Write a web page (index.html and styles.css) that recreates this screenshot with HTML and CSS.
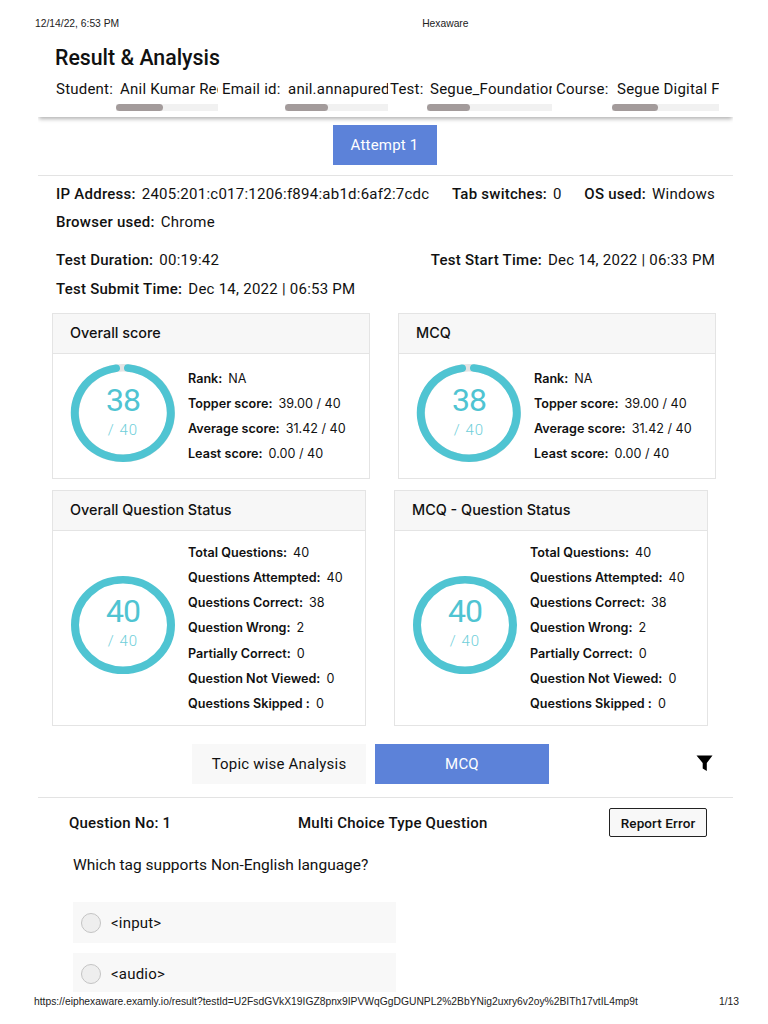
FILE: index.html
```html
<!DOCTYPE html>
<html lang="en">
<head>
<meta charset="utf-8">
<title>Hexaware</title>
<link rel="stylesheet" href="styles.css">
</head>
<body>
<div class="page">
  <header class="print-head">
    <span class="print-date">12/14/22, 6:53 PM</span>
    <span class="print-title">Hexaware</span>
  </header>
  <main class="sheet">
    <section class="top">
      <h1 class="title">Result &amp; Analysis</h1>
      <div class="meta">
        <div class="meta-cell cell-student"><span class="meta-label">Student:</span><div class="meta-scroll"><span class="meta-value">Anil Kumar Reddy Annapureddy</span><div class="track"><div class="thumb"></div></div></div></div>
        <div class="meta-cell cell-email"><span class="meta-label">Email id:</span><div class="meta-scroll"><span class="meta-value">anil.annapureddy@hexaware.com</span><div class="track"><div class="thumb"></div></div></div></div>
        <div class="meta-cell cell-test"><span class="meta-label">Test:</span><div class="meta-scroll"><span class="meta-value">Segue_Foundation_Assessment</span><div class="track"><div class="thumb"></div></div></div></div>
        <div class="meta-cell cell-course"><span class="meta-label">Course:</span><div class="meta-scroll"><span class="meta-value">Segue Digital Foundation</span><div class="track"><div class="thumb"></div></div></div></div>
      </div>
    </section>
    <div class="attempt-bar"><button class="attempt">Attempt 1</button></div>
    <section class="info">
      <div class="info-row">
        <span><b>IP Address:</b>2405:201:c017:1206:f894:ab1d:6af2:7cdc</span>
        <span><b>Tab switches:</b>0</span>
        <span><b>OS used:</b>Windows</span>
      </div>
      <div class="info-row row-browser"><span><b>Browser used:</b>Chrome</span></div>
      <div class="info-row row-duration">
        <span><b>Test Duration:</b>00:19:42</span>
        <span><b>Test Start Time:</b>Dec 14, 2022 | 06:33 PM</span>
      </div>
      <div class="info-row row-submit"><span><b>Test Submit Time:</b>Dec 14, 2022 | 06:53 PM</span></div>
    </section>
    <section class="cards cards-score">
      <article class="card">
        <h2 class="card-head">Overall score</h2>
        <div class="card-body">
          <div class="ring">
            <svg viewBox="0 0 106 106" preserveAspectRatio="none" class="ring-svg"><circle class="ring-bg" cx="53" cy="53" r="48"/><path class="ring-fg" d="M58 5.3A48 48 0 1 1 46 5.500"/></svg>
            <div class="ring-text"><span class="ring-num">38</span><span class="ring-den">/ 40</span></div>
          </div>
          <ul class="stats">
            <li><b>Rank:</b>NA</li>
            <li><b>Topper score:</b>39.00 / 40</li>
            <li><b>Average score:</b>31.42 / 40</li>
            <li><b>Least score:</b>0.00 / 40</li>
          </ul>
        </div>
      </article>
      <article class="card">
        <h2 class="card-head">MCQ</h2>
        <div class="card-body">
          <div class="ring">
            <svg viewBox="0 0 106 106" preserveAspectRatio="none" class="ring-svg"><circle class="ring-bg" cx="53" cy="53" r="48"/><path class="ring-fg" d="M58 5.3A48 48 0 1 1 46 5.500"/></svg>
            <div class="ring-text"><span class="ring-num">38</span><span class="ring-den">/ 40</span></div>
          </div>
          <ul class="stats">
            <li><b>Rank:</b>NA</li>
            <li><b>Topper score:</b>39.00 / 40</li>
            <li><b>Average score:</b>31.42 / 40</li>
            <li><b>Least score:</b>0.00 / 40</li>
          </ul>
        </div>
      </article>
    </section>
    <section class="cards cards-status">
      <article class="card">
        <h2 class="card-head">Overall Question Status</h2>
        <div class="card-body">
          <div class="ring">
            <svg viewBox="0 0 106 106" preserveAspectRatio="none" class="ring-svg"><circle class="ring-fg" cx="53" cy="53" r="48"/></svg>
            <div class="ring-text"><span class="ring-num">40</span><span class="ring-den">/ 40</span></div>
          </div>
          <ul class="stats">
            <li><b>Total Questions:</b>40</li>
            <li><b>Questions Attempted:</b>40</li>
            <li><b>Questions Correct:</b>38</li>
            <li><b>Question Wrong:</b>2</li>
            <li><b>Partially Correct:</b>0</li>
            <li><b>Question Not Viewed:</b>0</li>
            <li><b>Questions Skipped :</b>0</li>
          </ul>
        </div>
      </article>
      <article class="card">
        <h2 class="card-head">MCQ - Question Status</h2>
        <div class="card-body">
          <div class="ring">
            <svg viewBox="0 0 106 106" preserveAspectRatio="none" class="ring-svg"><circle class="ring-fg" cx="53" cy="53" r="48"/></svg>
            <div class="ring-text"><span class="ring-num">40</span><span class="ring-den">/ 40</span></div>
          </div>
          <ul class="stats">
            <li><b>Total Questions:</b>40</li>
            <li><b>Questions Attempted:</b>40</li>
            <li><b>Questions Correct:</b>38</li>
            <li><b>Question Wrong:</b>2</li>
            <li><b>Partially Correct:</b>0</li>
            <li><b>Question Not Viewed:</b>0</li>
            <li><b>Questions Skipped :</b>0</li>
          </ul>
        </div>
      </article>
    </section>
    <nav class="tabs">
      <button class="tab">Topic wise Analysis</button>
      <button class="tab tab-active">MCQ</button>
      <svg class="filter" viewBox="0 0 16 16"><path d="M0 0.500h16L10.300 8V16L6.200 13.500V8Z"/></svg>
    </nav>
    <section class="question">
      <div class="q-head">
        <span class="q-no">Question No: 1</span>
        <span class="q-type">Multi Choice Type Question</span>
        <button class="report">Report Error</button>
      </div>
      <p class="q-text">Which tag supports Non-English language?</p>
      <div class="option"><span class="radio"></span>&lt;input&gt;</div>
      <div class="option"><span class="radio"></span>&lt;audio&gt;</div>
    </section>
  </main>
  <footer class="print-foot">
    <span>https://eiphexaware.examly.io/result?testId=U2FsdGVkX19IGZ8pnx9IPVWqGgDGUNPL2%2BbYNig2uxry6v2oy%2BITh17vtIL4mp9t</span>
    <span>1/13</span>
  </footer>
</div>
</body>
</html>
```
FILE: styles.css
```css
* { box-sizing: border-box; }
html, body { margin: 0; padding: 0; background: #fff; }
body { font-family: Roboto, "Liberation Sans", sans-serif; color: #111; }
.page { width: 768px; height: 1024px; overflow: hidden; display: flex; flex-direction: column; }

.print-head, .print-foot {
  font-family: "Liberation Sans", Arial, sans-serif;
  font-size: 10.300px;
  color: #222;
  flex: none;
}
.print-head { height: 38px; padding: 18px 0 0 35px; display: flex; }
.print-title { margin-left: 303px; }
.print-foot { height: 28px; margin-top: 4px; padding: 0 29px 0 34px; display: flex; justify-content: space-between; }

.sheet { flex: 1; min-height: 0; overflow: hidden; margin: 0 35px 0 38px; }

.top { height: 79px; box-shadow: 0 3px 4px -1px rgba(0,0,0,.3); padding-left: 18px; }
.title { margin: 0 0 0 -1px; font-size: 21.300px; font-weight: 500; line-height: 26px; padding-top: 7px; height: 33px; }
.meta { display: flex; margin-top: 8px; font-size: 15px; line-height: 20px; letter-spacing: .22px; }
.meta-cell { display: flex; flex: none; }
.meta-label { flex: none; }
.meta-scroll { overflow: hidden; flex: none; }
.meta-value { display: block; white-space: nowrap; }
.cell-student { width: 166px; }
.cell-email { width: 168px; }
.cell-test { width: 166px; }
.cell-course { width: 163px; }
.cell-student .meta-label { width: 60px; }
.cell-email .meta-label { width: 63px; }
.cell-test .meta-label { width: 37px; }
.cell-course .meta-label { width: 56px; }
.cell-student .meta-scroll { width: 102px; }
.cell-email .meta-scroll { width: 103px; }
.cell-test .meta-scroll { width: 125px; }
.cell-course .meta-scroll { width: 107px; }
.cell-student .meta-value { padding-left: 4px; }
.cell-email .meta-value { padding-left: 3px; }
.cell-test .meta-value { padding-left: 3px; }
.cell-course .meta-value { padding-left: 5px; }
.track { height: 7px; margin-top: 5px; background: #f1f1f1; }
.thumb { height: 7px; border-radius: 4px; background: #a39b9b; }
.cell-student .thumb { width: 47px; }
.cell-email .thumb { width: 43px; }
.cell-test .thumb { width: 43px; }
.cell-course .thumb { width: 46px; }

.attempt-bar { height: 59px; padding: 8px 2px 0 0; border-bottom: 1px solid #e3e3e3; display: flex; justify-content: center; align-items: flex-start; }
.attempt { width: 104px; height: 40px; border: 0; background: #5c82d9; color: #fff; font: 400 15px Roboto, sans-serif; letter-spacing: .2px; }

.info { padding: 0 18px; font-size: 15px; line-height: 20px; letter-spacing: .25px; }
.info b { font-weight: 500; margin-right: 6px; }
.info-row { display: flex; justify-content: space-between; padding-top: 8px; }
.row-duration { padding-top: 18px; }
.row-submit { padding-top: 9px; }

.cards { display: flex; gap: 28px; margin-left: 14px; }
.cards-score { margin-top: 14px; }
.cards-score .card { width: 318px; height: 166px; }
.cards-status { margin-top: 11px; }
.cards-status .card { width: 314px; height: 236px; }
.card { border: 1px solid #e4e4e4; }
.card-head { margin: 0; height: 40px; padding: 0 17px; background: #f7f7f7; border-bottom: 1px solid #e4e4e4; font: 500 14.400px/37px Inter, Roboto, sans-serif; }
.card-body { display: flex; align-items: center; padding-left: 17px; }
.cards-score .card-body { height: 124px; }
.cards-status .card-body { height: 194px; }

.ring { position: relative; width: 106px; height: 100px; flex: none; margin-top: -6px; }
.cards-status .ring { margin-top: -7px; }
.ring-svg { display: block; width: 106px; height: 100px; }
.ring-bg { fill: none; stroke: #e4e4e4; stroke-width: 8; }
.ring-fg { fill: none; stroke: #4fc4d2; stroke-width: 8; stroke-linecap: round; }
.ring-text { position: absolute; inset: 0; display: flex; flex-direction: column; align-items: center; justify-content: center; color: #4fc4d2; }
.ring-num { font-size: 32px; font-weight: 400; line-height: 33px; margin-top: -3px; letter-spacing: -1px; }
.ring-den { font-size: 15px; font-weight: 300; line-height: 20px; margin-top: 3px; color: #6fcfda; letter-spacing: 1px; }

.stats { list-style: none; margin: 0 0 0 12px; padding: 0; font: 400 12.600px/25.200px Inter, Roboto, sans-serif; }
.cards-score .stats { line-height: 25px; }
.stats b { font-weight: 600; margin-right: 6px; }

.tabs { position: relative; height: 72px; padding: 18px 0 0 154px; display: flex; gap: 9px; border-bottom: 1px solid #e3e3e3; align-items: flex-start; }
.tab { width: 174px; height: 40px; border: 0; background: #f8f8f8; color: #111; font: 400 15px Roboto, sans-serif; letter-spacing: .2px; }
.tab-active { background: #5c82d9; color: #fff; }
.filter { position: absolute; left: 658px; top: 29px; width: 17px; height: 16px; fill: #000; }

.question { padding-left: 35px; }
.q-head { display: flex; align-items: center; height: 29px; margin-top: 10px; margin-left: -4px; font-size: 15px; font-weight: 500; letter-spacing: .22px; }
.q-no { width: 229px; }
.q-type { width: 311px; }
.report { width: 98px; height: 29px; background: #f8f8f8; border: 1.500px solid #222; border-radius: 2px; font: 500 13.500px Roboto, sans-serif; letter-spacing: .1px; color: #111; padding: 0; }
.q-text { margin: 18px 0 0; font-size: 15.500px; line-height: 20px; }
.option { width: 323px; height: 41px; margin-top: 10px; background: #f8f8f8; display: flex; align-items: center; padding-left: 8px; font-size: 15px; letter-spacing: .2px; }
.q-text + .option { margin-top: 27px; }
.radio { width: 20px; height: 20px; border-radius: 50%; border: 1px solid #c4c4c4; background: #eee; margin-right: 10px; }
```
